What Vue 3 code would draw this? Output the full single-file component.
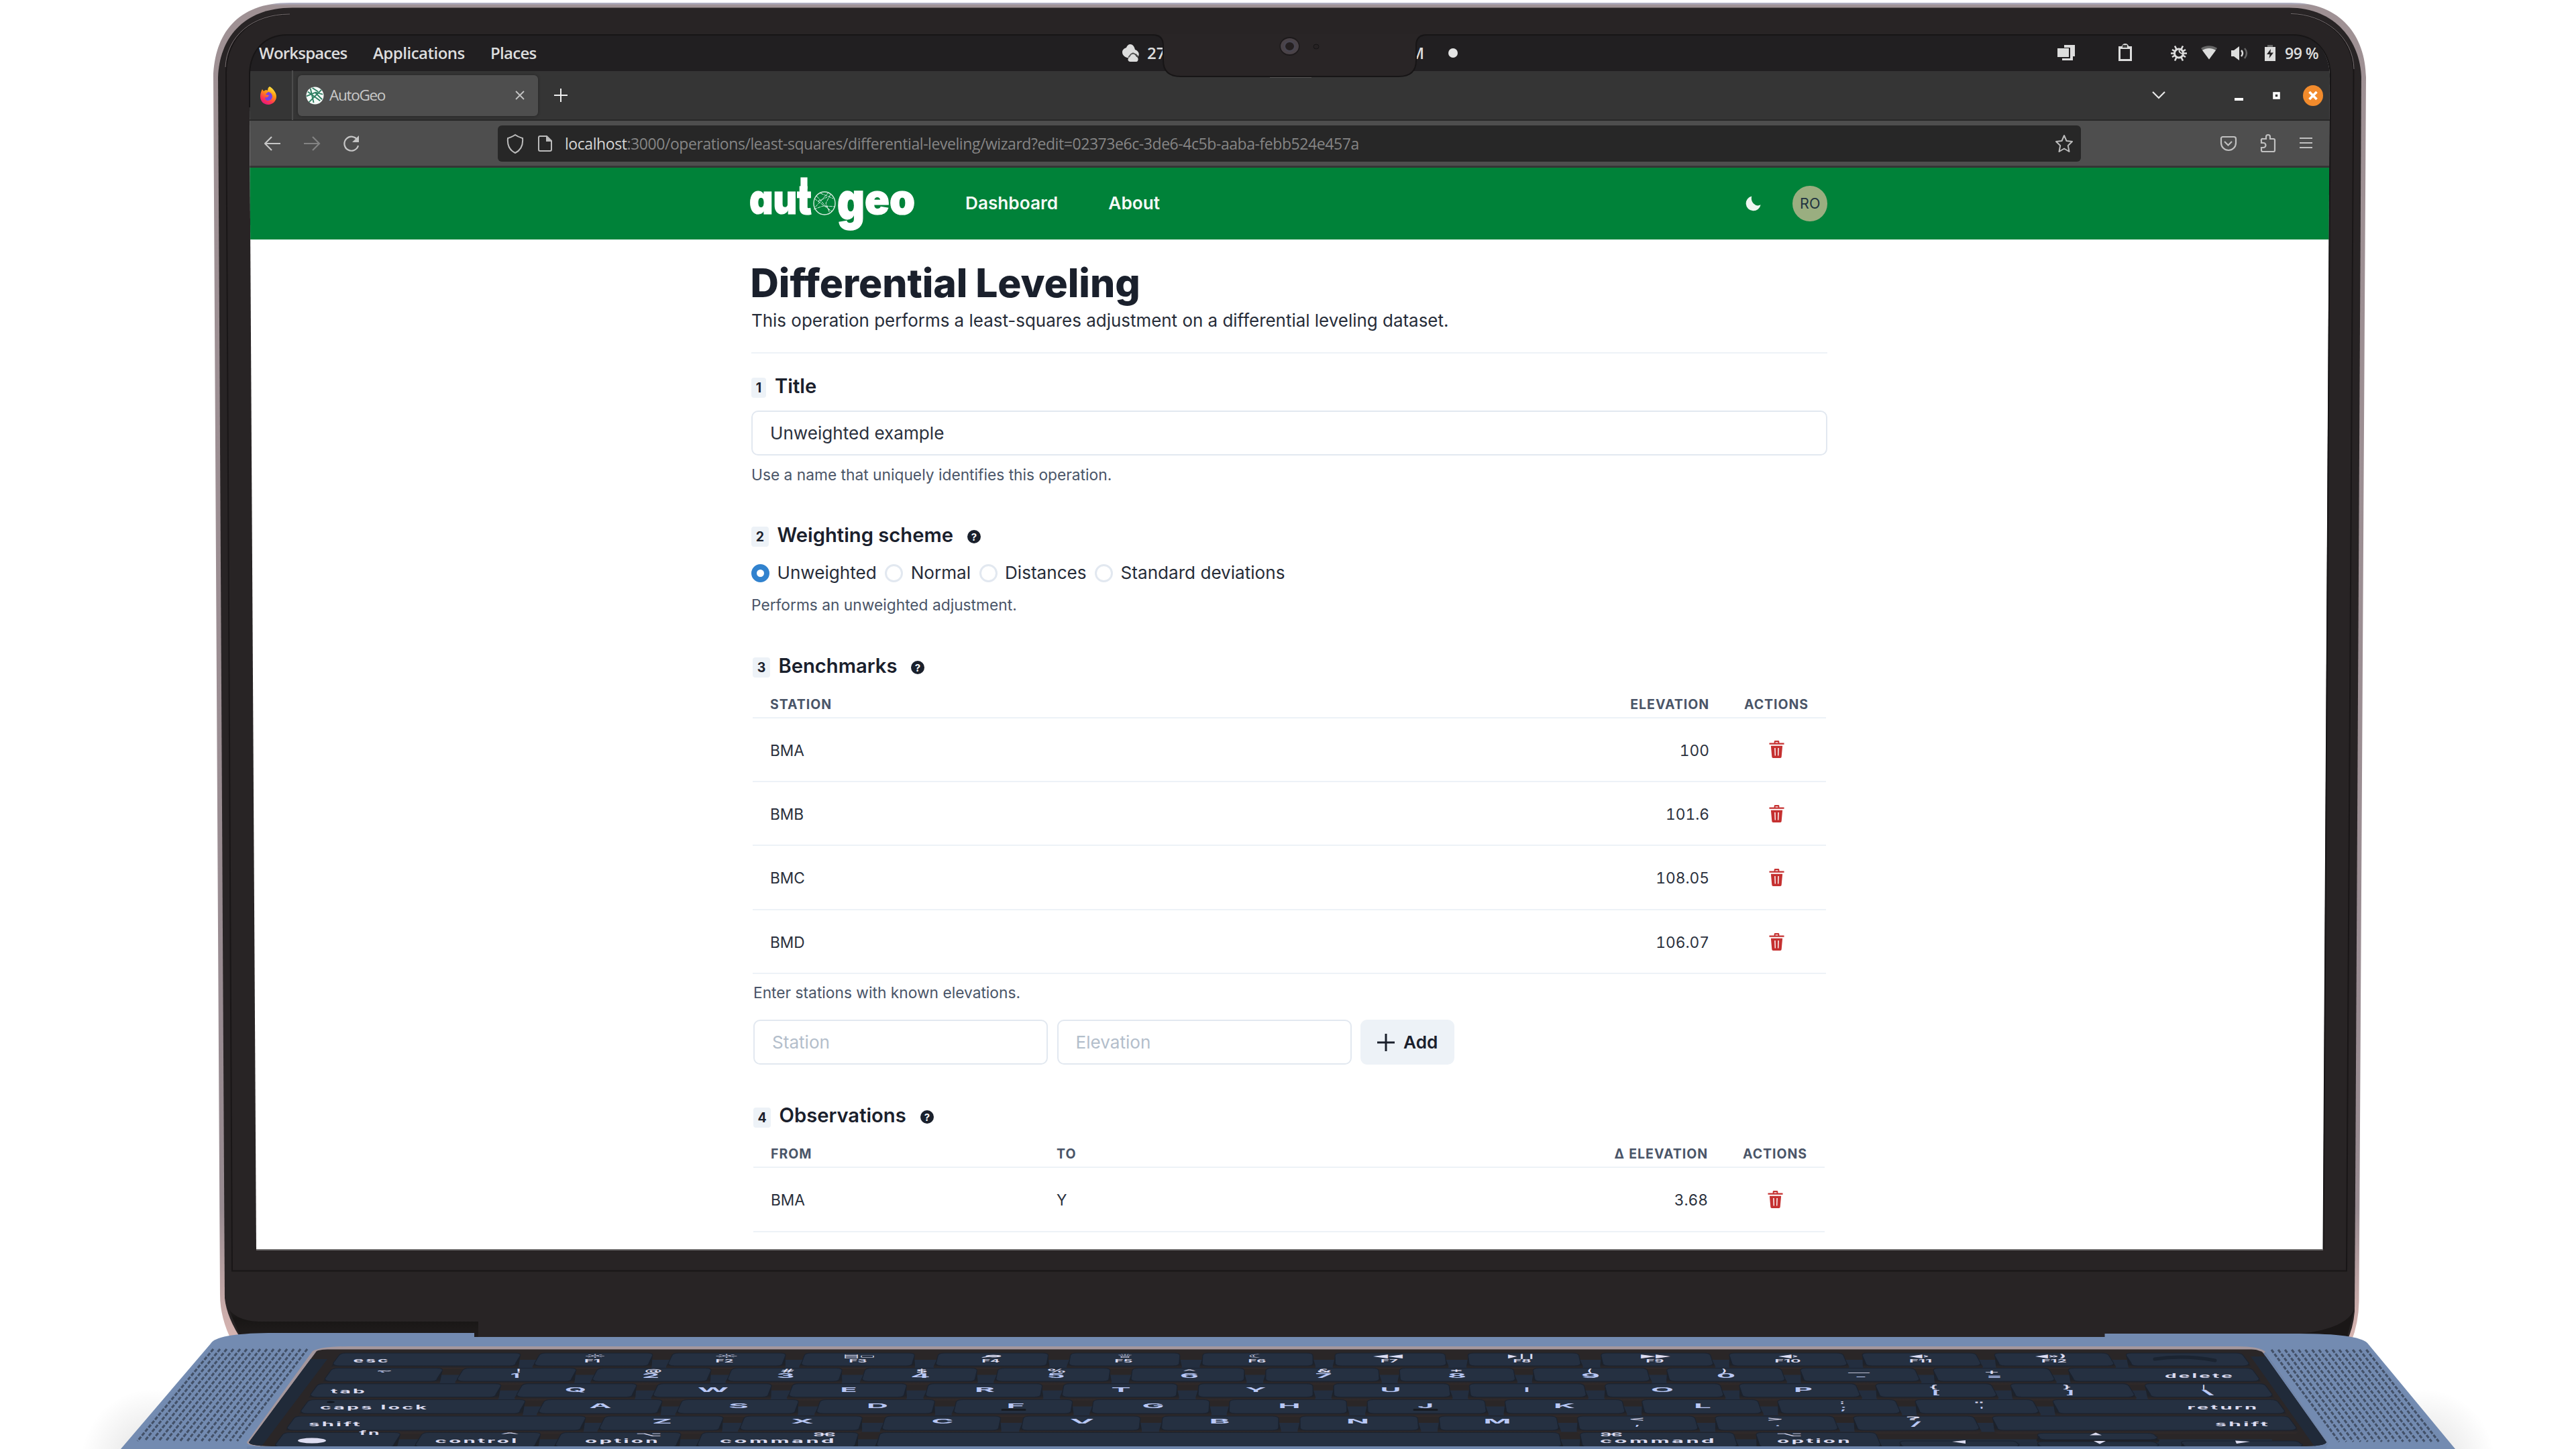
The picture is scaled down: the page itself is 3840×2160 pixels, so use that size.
<script setup>
const benchmarks = [
  { station: 'BMA', elevation: '100' },
  { station: 'BMB', elevation: '101.6' },
  { station: 'BMC', elevation: '108.05' },
  { station: 'BMD', elevation: '106.07' },
]
const observations = [{ from: 'BMA', to: 'Y', delta: '3.68' }]
const schemes = ['Unweighted', 'Normal', 'Distances', 'Standard deviations']

// Keyboard rows: top edge, bottom edge and the [left, right] span of every key cap.
const rows = [
  { t: 2017, b: 2036, keys: [[507, 777], [805, 974], [1003, 1172], [1200, 1364], [1399, 1563], [1596, 1759], [1793, 1957], [1990, 2154], [2188, 2353], [2386, 2549], [2577, 2747], [2775, 2945], [2972, 3142], [3168, 3342]] },
  { t: 2039.5, b: 2059, keys: [[495, 661], [691, 860], [891, 1061], [1091, 1256], [1290, 1457], [1488, 1655], [1688, 1855], [1887, 2055], [2086, 2256], [2285, 2455], [2484, 2655], [2683, 2854], [2881, 3054], [3082, 3357]] },
  { t: 2062.7, b: 2082.5, keys: [[474, 748], [779, 950], [981, 1151], [1182, 1352], [1384, 1554], [1586, 1755], [1787, 1957], [1988, 2160], [2190, 2361], [2392, 2564], [2592, 2766], [2795, 2968], [2996, 3172], [3196, 3376]] },
  { t: 2086.5, b: 2107, keys: [[460, 784], [812, 988], [1017, 1191], [1223, 1394], [1426, 1599], [1630, 1803], [1833, 2007], [2038, 2213], [2243, 2418], [2447, 2620], [2649, 2825], [2854, 3030], [3059, 3394]] },
  { t: 2111, b: 2132, keys: [[440, 874], [902, 1079], [1110, 1286], [1320, 1492], [1526, 1700], [1733, 1906], [1938, 2113], [2145, 2320], [2351, 2526], [2556, 2733], [2762, 2942], [2969, 3411]] },
  { t: 2135.5, b: 2157, keys: [[423, 598], [630, 807], [837, 1016], [1047, 1280], [1312, 2324], [2355, 2584], [2617, 2796]] },
]
const arrowKeys = [
  { t: 2148, b: 2157, x: [2831, 3006] },
  { t: 2136.5, b: 2146, x: [3036, 3211] },
  { t: 2149, b: 2157, x: [3036, 3214] },
  { t: 2148, b: 2157, x: [3250, 3427] },
]
const lean = (x, h) => (x - 1920) * 0.00038 * h
function cap(l, r, t, b, grow = 0) {
  const h = b - t
  const bl = l + lean(l, h) - grow
  const br = r + lean(r, h) + grow
  const top = t
  const bot = b + grow
  return `M${l + 9},${top} H${r - 9} Q${r},${top} ${r + lean(r, 4)},${top + 4} L${br},${bot - 4} Q${br},${bot} ${br - 9},${bot} H${bl + 9} Q${bl},${bot} ${bl},${bot - 4} L${l + lean(l, 4)},${top + 4} Q${l},${top} ${l + 9},${top} Z`
}
const keyRows = [
  ...rows,
  ...arrowKeys.map((k) => ({ t: k.t, b: k.b, keys: [k.x] })),
]

// Legends: [text, centre x, baseline, width]
const words = [
  ['esc', 554, 2031, 55], ['tab', 520, 2077, 54], ['caps lock', 558, 2101, 162], ['shift', 500, 2126, 80],
  ['fn', 552, 2139, 33], ['control', 711, 2151, 125], ['option', 928, 2151, 112], ['command', 1160, 2151, 174],
  ['command', 2472, 2151, 174], ['option', 2705, 2151, 112], ['shift', 3343, 2126, 82], ['return', 3314, 2101, 107],
  ['delete', 3279, 2054, 104],
]
const fkeys = [
  ['F1', 883, 2031, 24], ['F2', 1080, 2031, 27], ['F3', 1279, 2031, 27], ['F4', 1477, 2031, 27], ['F5', 1675, 2031, 27],
  ['F6', 1874, 2031, 27], ['F7', 2071, 2031, 26], ['F8', 2269, 2031, 27], ['F9', 2467, 2031, 27], ['F10', 2665, 2031, 39],
  ['F11', 2863, 2031, 34], ['F12', 3062, 2031, 38],
]
const letters = [
  ['Q', 858, 2075, 32], ['W', 1063, 2075, 46], ['E', 1265, 2075, 25], ['R', 1468, 2075, 30], ['T', 1671, 2075, 29],
  ['Y', 1872, 2075, 31], ['U', 2073, 2075, 31], ['I', 2276, 2075, 8], ['O', 2478, 2075, 34], ['P', 2688, 2075, 28],
  ['A', 895, 2098.5, 33], ['S', 1101, 2098.5, 30], ['D', 1308, 2098.5, 32], ['F', 1514, 2098.5, 27], ['G', 1719, 2098.5, 33],
  ['H', 1922, 2098.5, 33], ['J', 2125, 2098.5, 24], ['K', 2332, 2098.5, 32], ['L', 2538, 2098.5, 26],
  ['Z', 987, 2121.5, 30], ['X', 1196, 2121.5, 34], ['C', 1405, 2121.5, 33], ['V', 1613, 2121.5, 36], ['B', 1818, 2121.5, 31],
  ['N', 2024, 2121.5, 34], ['M', 2232, 2121.5, 41],
  ['1', 768, 2054, 14], ['2', 970, 2054, 26], ['3', 1171, 2054, 27], ['4', 1372, 2054, 29], ['5', 1574, 2054, 27],
  ['6', 1773, 2054, 28], ['7', 1973, 2054, 25], ['8', 2172, 2054, 28], ['9', 2371, 2054, 28], ['0', 2573, 2054, 28],
  ['-', 2774, 2055, 18], ['=', 2973, 2055, 24], ['`', 570, 2052, 12],
  ['[', 2886, 2079, 13], [']', 3086, 2079, 13], ['\\', 3291, 2079, 20], [';', 2748, 2102, 9], ["'", 2954, 2104, 7],
  [',', 2441, 2125, 8], ['.', 2650, 2126, 8], ['/', 2856, 2126, 16],
]
const shifted = [
  ['~', 573, 2046, 26], ['!', 773, 2046, 8], ['@', 974, 2046, 27], ['#', 1174, 2046, 22], ['$', 1374, 2046, 18],
  ['%', 1575, 2046, 27], ['^', 1773, 2047, 24], ['&', 1974, 2046, 22], ['*', 2171, 2047, 18], ['(', 2370, 2046, 8],
  [')', 2570, 2046, 8], ['_', 2771, 2045, 32], ['+', 2969, 2048, 24], ['{', 2882, 2070, 15], ['}', 3081, 2070, 15],
  ['|', 3285, 2070, 6], [':', 2746, 2093, 7], ['"', 2950, 2095, 17], ['<', 2440, 2118, 25], ['>', 2646, 2118, 26], ['?', 2852, 2117, 24],
  ['^', 760, 2141, 34], ['⌥', 967, 2141, 40], ['⌘', 1229, 2141, 38], ['⌘', 2402, 2141, 38], ['⌥', 2667, 2141, 40],
  ['☼', 887, 2024, 34], ['☼', 1083, 2024, 38], ['▤▭', 1281, 2024, 48], ['⌕', 1479, 2024, 30], ['♕', 1677, 2024, 26],
  ['☾', 1875, 2024, 30], ['◀◀', 2069, 2024, 44], ['▶❙❙', 2269, 2024, 42], ['▶▶', 2468, 2024, 44],
  ['◀›', 2666, 2024, 30], ['◀›', 2861, 2024, 30], ['◀»)', 3057, 2024, 46],
]
const leftGrille = Array.from({ length: 15 }, (_, i) => [318 + i * 10, 205 + i * 10.6])
const rightGrille = Array.from({ length: 15 }, (_, i) => [3386 + i * 10.1, 3487 + i * 10.6])
</script>

<template>
  <div class="stage">
    <svg class="layer" viewBox="0 0 3840 2160">
      <defs>
        <linearGradient id="rim" x1="0" x2="0" y1="0" y2="1">
          <stop offset="0" stop-color="#b3b6cd" />
          <stop offset="0.002" stop-color="#9f9194" />
          <stop offset="0.9" stop-color="#988b91" />
          <stop offset="1" stop-color="#d9b6b2" />
        </linearGradient>
        <linearGradient id="hinge" x1="0" x2="0" y1="0" y2="1">
          <stop offset="0" stop-color="#282425" />
          <stop offset="0.4" stop-color="#181615" />
          <stop offset="1" stop-color="#221e1e" />
        </linearGradient>
        <linearGradient id="side" x1="0" x2="0" y1="0" y2="1">
          <stop offset="0" stop-color="#1a212c" />
          <stop offset="0.7" stop-color="#1f2229" />
          <stop offset="1" stop-color="#322a29" />
        </linearGradient>
        <radialGradient id="shade">
          <stop offset="0" stop-color="#000" stop-opacity="0.13" />
          <stop offset="1" stop-color="#000" stop-opacity="0" />
        </radialGradient>
        <clipPath id="wellclip">
          <path d="M472,2014 Q482,2010 520,2010 H3335 Q3365,2010 3373,2016 L3468,2150 Q3465,2156 3430,2156 H415 Q372,2156 371,2150 Z" />
        </clipPath>
      </defs>
      <ellipse cx="230" cy="2180" rx="110" ry="110" fill="url(#shade)" />
      <ellipse cx="3610" cy="2180" rx="110" ry="110" fill="url(#shade)" />

      <!-- lid -->
      <path d="M318,115 C320,52 352,4 432,4 H3415 C3490,4 3526,54 3527,115 L3516.500,1940 Q3516,1972 3505,2000 H346 Q328,1965 328,1930 Z" fill="url(#rim)" />
      <path d="M325,115 C327,60 360,11.500 436,11.500 H3412 C3482,11.500 3518,62 3520,115 L3510,1955 Q3508,1980 3498,2000 H362 Q338,1965 335,1935 Z" fill="#282425" />
      <path d="M432,21 C375,21 338,55 337,108 L346,1894.500 H3498 L3508.500,108 C3508,55 3465,21 3415,21" fill="none" stroke="#191617" stroke-width="2" />
      <path d="M432,21 C375,21 338,55 336,100 M3415,20.500 C3465,21 3508,55 3509,103" fill="none" stroke="#776f71" stroke-width="1" />
      <path d="M338,1945 Q347,1968 385,1970 H713 V1996 H360 Z" fill="url(#hinge)" />
      <path d="M3510,1950 Q3500,1980 3430,1988 L3498,1996 Z" fill="#1a1717" />

      <!-- deck -->
      <path d="M180,2160 L314,2003 Q322,1988 400,1987 H707 V1993 H3137.500 V1988 H3426 Q3515,1988 3529,2002 L3660,2160 Z" fill="#738bb1" />
      <g stroke="#3b475c" stroke-width="3.200" stroke-dasharray="5.500 2.200" opacity="0.85">
        <path v-for="(g, i) in leftGrille" :key="'l' + i" :d="`M${g[0]},2011 L${g[1]},2148`" />
        <path v-for="(g, i) in rightGrille" :key="'r' + i" :d="`M${g[0]},2012 L${g[1]},2149`" />
      </g>
      <path d="M466,2014 Q480,2007 520,2007 H3335 Q3368,2007 3377,2015 L3471,2151 Q3466,2157 3430,2157 H415 Q368,2157 368,2150 Z" fill="#a4979d" />
      <path d="M3377,2015 L3471,2151 L3468,2156 L3300,2157 L3340,2050 Z" fill="#6d84a9" />
      <g clip-path="url(#wellclip)">
        <rect x="360" y="2011.500" width="3120" height="146" fill="#2a2627" />
        <path d="M488,2026 L390,2156 H360 L460,2026 Z M3355,2022 L3450,2156 H3480 L3390,2022 Z" fill="#202a39" />
        <g v-for="(row, i) in rows" :key="'band' + i">
          <rect :x="row.keys[0][0]" :y="row.t + 10" :width="3840 - 2 * row.keys[0][0] - 30" height="13.500" fill="#232e3f" />
        </g>
        <g v-for="(row, i) in keyRows" :key="'row' + i">
          <path v-for="(k, j) in row.keys" :key="'s' + j" :d="cap(k[0], k[1], row.t + 2, row.b + 1, 4)" fill="url(#side)" />
          <path v-for="(k, j) in row.keys" :key="'k' + j" :d="cap(k[0], k[1], row.t, row.b)" fill="#253041" stroke="#1b2330" stroke-width="1.200" />
        </g>
        <g class="legend">
          <text v-for="(w, i) in words" :key="'w' + i" :x="w[1] - w[3] / 2" :y="w[2]" :textLength="w[3]" lengthAdjust="spacingAndGlyphs" font-size="9" class="word">{{ w[0] }}</text>
          <text v-for="(w, i) in fkeys" :key="'f' + i" :x="w[1] - w[3] / 2" :y="w[2]" :textLength="w[3]" lengthAdjust="spacingAndGlyphs" font-size="6.500" font-weight="700">{{ w[0] }}</text>
          <text v-for="(w, i) in letters" :key="'c' + i" :x="w[1] - w[3] / 2" :y="w[2]" :textLength="w[3]" lengthAdjust="spacingAndGlyphs" font-size="9.5" class="cool">{{ w[0] }}</text>
          <text v-for="(w, i) in shifted" :key="'u' + i" :x="w[1] - w[3] / 2" :y="w[2]" :textLength="w[3]" lengthAdjust="spacingAndGlyphs" font-size="7.5" class="sym">{{ w[0] }}</text>
          <ellipse cx="465" cy="2147.500" rx="21" ry="4" />
          <path d="M2910,2149 l20,-2 v5 Z M3115,2139.500 l9,-4 l9,4 Z M3121,2148 h18 l-9,4.500 Z M3332,2147.500 l22,1.500 l-20,3 Z" />
        </g>
        <path d="M3212,2026 Q3255,2019 3302,2028" fill="none" stroke="#1b2431" stroke-width="5" stroke-linecap="round" />
        <ellipse cx="493" cy="2090" rx="6" ry="1.500" fill="#11161f" />
        <path d="M1494,2101.500 h34 M2108,2101.500 h34" stroke="#171b22" stroke-width="3" stroke-linecap="round" />
      </g>
      <rect x="368" y="2156" width="3100" height="4" fill="#6d85ab" />
    </svg>

    <div class="screen">
      <div class="topbar">
        <span class="m1">Workspaces</span><span class="m2">Applications</span><span class="m3">Places</span>
        <svg class="weather" viewBox="0 0 28 27">
          <path d="M13,0 C17,0 19,4 20,8 C25,10 27,14 25,18 C23,16 22,14 20,14 C16,12 13,14 11,20 C7,21 1,17 1,12 C1,8 4,6 7,5 C8,2 10,0 13,0 Z M18,14.500 C20,15 21,17 22,18.500 C26,20 25,26 22,26 H13 C9,26 8,21 12,19 C13,16 15,14 18,14.500 Z" fill="#ddd" />
          <path d="M10,19.500 L14,14.500 L17,13 L21,15 L25,19" fill="none" stroke="#555" stroke-width="1.500" />
        </svg>
        <span class="temp">27</span>
        <span class="meridiem">M</span>
        <i class="notice"></i>
        <svg class="tray" viewBox="0 0 400 28">
          <g fill="#ddd">
            <path d="M11,2 H27 V19 H24 V25 H8 V22 H20 V6 H11 Z" />
            <rect x="1" y="7" width="17" height="13" />
            <path d="M92,4 h5 a5,4 0 0 1 10,0 h5 v22 h-20 Z M95,8 v15 h14 v-15 Z" fill-rule="evenodd" />
            <path d="M227,23.500 L215,7 C221,2 233,2 239,7 Z" fill="#666" />
            <path d="M227,23.500 L217,10 C223,6 231,6 237,10 Z" />
            <path d="M260,10 h4 l8,-6 v21 l-8,-6 h-4 Z" />
            <path d="M310,5 h4 v-2 h8 v2 h4 v21 h-16 Z" />
          </g>
          <path d="M98,2 h7 v4 h-7 Z" fill="#444" />
          <path d="M314,2 h8 v3 h-8 Z" fill="#666" />
          <path d="M319,8 L313,16 H317.500 L316.500,22 L323,13.500 H318.500 Z" fill="#211f21" />
          <path d="M275,10 q4,4 0,9" fill="none" stroke="#ddd" stroke-width="2.500" />
          <path d="M280,7 q6,7 0,15" fill="none" stroke="#666" stroke-width="2.500" />
          <g stroke="#ddd" stroke-width="3" fill="none">
            <circle cx="182" cy="14.500" r="6.500" />
            <path d="M188,14.500 h6 M170,14.500 h6 M185,9.500 l3,-6 M179,9.500 l-3,-6 M185,19.500 l3,6 M179,19.500 l-3,6 M187,12 l5,-3 M177,12 l-5,-3 M187,17 l5,3 M177,17 l-5,3" stroke-width="2.600" />
            <path d="M183,9 q-2,4 4,6" stroke-width="2" />
          </g>
        </svg>
        <span class="battery">99 %</span>
      </div>

      <div class="tabs">
        <svg class="fox" viewBox="0 0 26 27">
          <defs>
            <linearGradient id="fire" x1="0.8" y1="0" x2="0.3" y2="1">
              <stop offset="0" stop-color="#fff44f" /><stop offset="0.4" stop-color="#ff980e" /><stop offset="0.75" stop-color="#ff3750" /><stop offset="1" stop-color="#e5157f" />
            </linearGradient>
          </defs>
          <path d="M15,0 C20,3 25,9 25,15 C25,22 19,27 13,27 C6,27 1,22 1,15 C1,11 2,7 4,4 L6,7 C8,5 11,5 12,6 C12,3 13,1 15,0 Z" fill="url(#fire)" />
          <path d="M12,8 C16,8 19,11 19,15 C19,18 16,21 12.500,21 C10,21 8,19 8,16 C10,17 13,16 14,13 C12,13 9,12 9,11 C10,10 12,10 12,8 Z" fill="#7542e5" />
        </svg>
        <i class="sep"></i>
        <div class="tab">
          <svg class="favicon" viewBox="0 0 28 28">
            <circle cx="14" cy="14" r="13.500" fill="#f4faf7" />
            <path d="M3,8 L22,22 M24,5 L5,24 M7,3 L12,25 M1,15 L15,9 L26,12 M14,9 L25,20 M10,2 L19,8" fill="none" stroke="#2f7f63" stroke-width="2" />
          </svg>
          <span>AutoGeo</span>
          <svg class="x" viewBox="0 0 16 16"><path d="M2,2 L14,14 M14,2 L2,14" stroke="#c4c4c4" stroke-width="1.800" /></svg>
        </div>
        <svg class="plus" viewBox="0 0 20 20"><path d="M10,0 V20 M0,10 H20" stroke="#eee" stroke-width="2" /></svg>
        <svg class="wm" viewBox="0 0 270 32">
          <g fill="none" stroke="#e8e8e8">
            <path d="M9,11 L18,20 L27,11" stroke-width="2.200" />
            <path d="M131,22 h13" stroke="#fff" stroke-width="4" />
            <rect x="190" y="13" width="7" height="7" stroke="#fff" stroke-width="3.600" />
          </g>
          <ellipse cx="248" cy="16.500" rx="15" ry="15.500" fill="#f28b2c" />
          <path d="M242.500,11 l11,11 M253.500,11 l-11,11" stroke="#fff" stroke-width="3.600" />
        </svg>
      </div>

      <div class="nav">
        <svg class="arrows" viewBox="0 0 150 28">
          <g fill="none" stroke="#c6c6c6" stroke-width="2.200">
            <path d="M24,14 H1 M11,4 L1,14 L11,24" />
            <path d="M59,14 H82 M72,4 L82,14 L72,24" stroke="#838383" />
            <path d="M139,9 A10.500,10.500 0 1 0 140,17" />
          </g>
          <path d="M141,2 V12 H131 Z" fill="#c6c6c6" />
        </svg>
        <div class="url">
          <svg class="shield" viewBox="0 0 72 30">
            <g fill="none" stroke="#bbb" stroke-width="2">
              <path d="M14,2 C18,5 22,6 25,7 C26,17 22,25 14,29 C6,25 2,17 3,7 C6,6 10,5 14,2 Z" />
              <path d="M51,4 H61 L68,11 V24 a2,2 0 0 1 -2,2 H51 a2,2 0 0 1 -2,-2 V6 a2,2 0 0 1 2,-2 Z" />
            </g>
            <path d="M60,4 V12 H69 Z" fill="#bbb" />
          </svg>
          <span><b>localhost</b>:3000/operations/least-squares/differential-leveling/wizard?edit=02373e6c-3de6-4c5b-aaba-febb524e457a</span>
          <svg class="star" viewBox="0 0 28 28"><path d="M14,2 L17.500,10 L26,11 L19.800,17 L21.500,26 L14,21.500 L6.500,26 L8.200,17 L2,11 L10.500,10 Z" fill="none" stroke="#bbb" stroke-width="2" stroke-linejoin="round" /></svg>
        </div>
        <svg class="tools" viewBox="0 0 160 30">
          <g fill="none" stroke="#c0c0c0" stroke-width="2.200">
            <path d="M13,5 h17 a3,3 0 0 1 3,3 v6 a11,11 0 0 1 -22,0 v-6 a2.500,2.500 0 0 1 2,-3 Z M16,12 l5.500,5.500 l5.500,-5.500" />
            <path d="M71,11 a2,2 0 0 1 2,-3 h5 v-3 a3,3 0 0 1 6,0 v3 h5 a2,2 0 0 1 2,2 v15 a2,2 0 0 1 -2,2 h-16 a2,2 0 0 1 -2,-2 v-4 h3 a3.500,3.500 0 0 0 0,-7 h-3 Z" />
            <path d="M128,7 h19 M128,14 h19 M128,21 h19" />
          </g>
        </svg>
      </div>

      <header class="header">
        <div class="container bar">
          <svg class="logo" viewBox="0 0 244 100">
            <g fill="#fff" stroke="#fff" stroke-width="1.200">
              <text x="-2" y="65" textLength="93" lengthAdjust="spacingAndGlyphs">aut</text>
              <text x="129" y="65" textLength="41" lengthAdjust="spacingAndGlyphs" transform="translate(0 -7.900) scale(1 1.250)">g</text>
              <text x="170" y="65" textLength="75" lengthAdjust="spacingAndGlyphs">eo</text>
              <rect x="75" y="11" width="9" height="16" />
            </g>
            <g fill="none" stroke="#fff" stroke-width="1.400" opacity="0.85">
              <ellipse cx="110" cy="49" rx="16" ry="17" />
              <path d="M95,42 L121,61 M98,38 L118,60 M116,33 L96,55 M104,34 L123,42 M94,58 L108,53 L126,54 M119,36 L112,49 L118,64 M100,46 L114,40" stroke-dasharray="5 1" stroke-width="1" />
            </g>
          </svg>
          <a class="dash">Dashboard</a>
          <a class="about">About</a>
          <svg class="moon" viewBox="0 0 26 26"><path d="M10,1 A10.500,12 0 0 0 24.500,15 A12,12 0 1 1 10,1 Z" fill="#eef6f1" /></svg>
          <div class="avatar">RO</div>
        </div>
      </header>

      <main class="container">
        <h1>Differential Leveling</h1>
        <p class="lead">This operation performs a least-squares adjustment on a differential leveling dataset.</p>
        <hr />

        <section class="title">
          <h2><i class="num one">1</i>Title</h2>
          <div class="input">Unweighted example</div>
          <p class="help">Use a name that uniquely identifies this operation.</p>
        </section>

        <section class="weights">
          <h2><i class="num">2</i>Weighting scheme
            <svg class="q" viewBox="0 0 20 20"><circle cx="10" cy="10" r="10" /><text x="10" y="15.500">?</text></svg>
          </h2>
          <div class="radios">
            <label v-for="(s, i) in schemes" :key="s"><i :class="{ on: i === 0 }"></i>{{ s }}</label>
          </div>
          <p class="help">Performs an unweighted adjustment.</p>
        </section>

        <section class="bench">
          <h2><i class="num">3</i>Benchmarks
            <svg class="q" viewBox="0 0 20 20"><circle cx="10" cy="10" r="10" /><text x="10" y="15.500">?</text></svg>
          </h2>
          <div class="tr th two"><span>STATION</span><span class="n">ELEVATION</span><span class="act">ACTIONS</span></div>
          <div v-for="b in benchmarks" :key="b.station" class="tr two">
            <span>{{ b.station }}</span><span class="n">{{ b.elevation }}</span>
            <span class="act"><svg class="trash" viewBox="0 0 24 28"><path d="M8,4 V2 a1.500,1.500 0 0 1 1.500,-1.500 h5 A1.500,1.500 0 0 1 16,2 V4 H23.500 V6.500 H0.500 V4 Z M10,4 h4 v-1.300 h-4 Z M3,8.500 H21 L19.500,25.500 a2,2 0 0 1 -2,2 H6.500 a2,2 0 0 1 -2,-2 Z M8.500,12 L9,24 H10.400 L10.100,12 Z M13.900,12 L13.600,24 H15 L15.500,12 Z" fill-rule="evenodd" /></svg></span>
          </div>
          <p class="help">Enter stations with known elevations.</p>
          <div class="adder">
            <div class="input ghost">Station</div>
            <div class="input ghost">Elevation</div>
            <div class="button"><svg viewBox="0 0 26 26"><path d="M13,0 V26 M0,13 H26" stroke="#1a202c" stroke-width="3" /></svg>Add</div>
          </div>
        </section>

        <section class="obs">
          <h2><i class="num">4</i>Observations
            <svg class="q" viewBox="0 0 20 20"><circle cx="10" cy="10" r="10" /><text x="10" y="15.500">?</text></svg>
          </h2>
          <div class="tr th three"><span>FROM</span><span class="plain">TO</span><span class="n">Δ ELEVATION</span><span class="act">ACTIONS</span></div>
          <div v-for="o in observations" :key="o.from" class="tr three">
            <span>{{ o.from }}</span><span class="plain">{{ o.to }}</span><span class="n">{{ o.delta }}</span>
            <span class="act"><svg class="trash" viewBox="0 0 24 28"><path d="M8,4 V2 a1.500,1.500 0 0 1 1.500,-1.500 h5 A1.500,1.500 0 0 1 16,2 V4 H23.500 V6.500 H0.500 V4 Z M10,4 h4 v-1.300 h-4 Z M3,8.500 H21 L19.500,25.500 a2,2 0 0 1 -2,2 H6.500 a2,2 0 0 1 -2,-2 Z M8.500,12 L9,24 H10.400 L10.100,12 Z M13.900,12 L13.600,24 H15 L15.500,12 Z" fill-rule="evenodd" /></svg></span>
          </div>
        </section>
      </main>
    </div>

    <!-- camera notch and glass edge -->
    <svg class="layer" viewBox="0 0 3840 2160">
      <path d="M1722,50 Q1734,52 1734,66 V90 Q1734,114 1760,114 H2085 Q2111,114 2111,90 V66 Q2111,52 2124,50 Z" fill="#292526" />
      <path d="M372,160 V110 C373,75 395,52 428,52 H1718 Q1734,52 1734,68 V90 Q1734,114 1760,114 H2085 Q2111,114 2111,90 V68 Q2111,52 2127,52 H3418 C3450,52 3472,75 3474,110 L3463.500,1862" fill="none" stroke="#171516" stroke-width="2" />
      <path d="M382,1863 H3463" stroke="#8a8889" stroke-width="1.500" />
      <path d="M1893,115.500 H1955" stroke="#555" stroke-width="1" />
      <ellipse cx="1922.500" cy="69" rx="15" ry="14" fill="#1d1a1b" />
      <ellipse cx="1922.500" cy="69" rx="13.500" ry="12" fill="#4a4348" />
      <ellipse cx="1922.500" cy="69" rx="9" ry="8.500" fill="#484550" />
      <ellipse cx="1922.500" cy="69" rx="6.500" ry="6" fill="#241f20" />
      <ellipse cx="1962" cy="69.500" rx="4" ry="3.500" fill="#262223" stroke="#161415" />
    </svg>
  </div>
</template>

<style>
body { background: #fff; }
</style>

<style scoped>
.stage { position: relative; width: 3840px; height: 2160px; overflow: hidden; background: #fff; font-family: Inter, sans-serif; color: #1a202c; }
.layer { position: absolute; left: 0; top: 0; width: 3840px; height: 2160px; }
.legend { fill: #dcdcf0; font-family: Inter, "DejaVu Sans", sans-serif; }
.word { font-weight: 700; letter-spacing: 1px; }
.cool { fill: #b9c8f5; font-weight: 700; }
.sym { font-weight: 600; font-family: "DejaVu Sans", sans-serif; }

.screen { position: relative; margin-left: 372px; width: 3101px; height: 1810px; top: 52px; background: #fff; overflow: hidden; clip-path: path("M0,108 V58 C1,23 23,0 56,0 H3045 C3078,0 3099,23 3101,58 L3091,1810 H10 Z"); }
.screen svg { display: block; flex: none; }

.topbar { display: flex; align-items: center; height: 54px; background: #211f21; color: #ddd; font: 600 24px/54px "Open Sans", sans-serif; letter-spacing: -0.7px; white-space: nowrap; }
.topbar span { flex: none; }
.m1 { width: 170px; margin-left: 14px; letter-spacing: -0.8px; }
.m2 { width: 175px; letter-spacing: -0.5px; }
.m3 { width: 941px; }
.weather { width: 28px; height: 27px; }
.temp { width: 389px; margin-left: 10px; letter-spacing: 0; }
.meridiem { margin-left: 2px; width: 50px; }
.notice { flex: none; width: 14px; height: 14px; border-radius: 50%; background: #e4e4e4; margin-left: 8px; }
.tray { width: 400px; height: 28px; margin-left: 893px; }
.battery { margin-left: -60px; letter-spacing: -0.5px; font-size: 23px; }

.tabs { display: flex; align-items: center; height: 74px; background: #353535; border-bottom: 2px solid #282828; box-sizing: border-box; }
.fox { width: 26px; height: 27px; margin-left: 15px; }
.sep { width: 2px; height: 74px; background: #4c4c4c; margin-left: 22px; }
.tab { display: flex; align-items: center; width: 358px; height: 61px; margin-left: 7px; border-radius: 6px; background: #4e4e4e; box-shadow: 0 0 4px rgba(0, 0, 0, 0.35); color: #c9c9c9; font: 400 22.500px/58px "Open Sans", sans-serif; letter-spacing: -1.300px; }
.favicon { width: 27px; height: 27px; margin-left: 12px; }
.tab span { width: 268px; margin-left: 8px; margin-top: -1px; }
.x { width: 16px; height: 16px; margin-left: 8px; }
.plus { width: 20px; height: 20px; margin-left: 24px; }
.wm { width: 270px; height: 32px; margin-left: 2354px; }

.nav { display: flex; align-items: center; height: 70px; background: #4e4e4e; border-bottom: 3px solid #353535; box-sizing: border-box; }
.arrows { width: 150px; height: 28px; margin-left: 22px; }
.url { display: flex; align-items: center; width: 2360px; height: 54px; margin-left: 198px; border-radius: 6px; background: #272727; color: #858585; font: 400 23px/54px "Open Sans", sans-serif; letter-spacing: -0.435px; white-space: nowrap; }
.url b { font-weight: 400; color: #d6d6d6; }
.shield { width: 72px; height: 30px; margin-left: 12px; }
.url span { margin-left: 16px; width: 2221px; }
.star { width: 28px; height: 28px; }
.tools { width: 160px; height: 30px; margin-left: 198px; }

.header { height: 107px; background: #008239; }
.container { margin-left: 748px; width: 1604px; }
.bar { display: flex; align-items: center; height: 107px; color: #f4faf6; font-weight: 600; font-size: 26.200px; line-height: 40px; }
.logo { width: 244px; height: 100px; margin-left: -1px; overflow: visible; font: 900 61px Inter, sans-serif; font-feature-settings: "cv11"; }
.dash { width: 215px; margin-left: 76px; margin-top: -1px; }
.about { width: 120px; margin-top: -1px; }
.moon { width: 24px; height: 25px; margin-left: 831px; }
.avatar { margin-left: 46px; width: 52px; height: 53px; border-radius: 50%; background: #9aae80; color: #1f3340; font-weight: 400; font-size: 21.500px; line-height: 52px; text-align: center; }

main { padding-top: 29px; }
h1 { margin: 0 0 0 -1.500px; font-size: 58.700px; line-height: 72px; font-weight: 800; word-spacing: -1px; letter-spacing: -0.050px; white-space: nowrap; }
p { margin: 0; white-space: nowrap; }
.lead { font-size: 25.950px; line-height: 40px; margin-top: -0.500px; color: #262c38; }
hr { border: 0; height: 2px; margin: 27px 0 0; background: #edf2f7; }
h2 { margin: 0; display: flex; align-items: center; height: 44px; font-size: 29.200px; line-height: 44px; font-weight: 600; white-space: nowrap; }
.num { display: block; width: 26px; height: 30px; margin: 5px 12.500px 0 0; border-radius: 4px; background: #edf2f7; font: 700 19.500px/30px Inter, sans-serif; text-align: center; }
.num.one { width: 22px; margin-right: 13px; }
.q { width: 20px; height: 20px; margin: 4px 0 0 21px; fill: #1a202c; }
.q text { fill: #fff; font: 700 15px Inter, sans-serif; text-anchor: middle; }
.help { font-size: 22.750px; line-height: 32px; color: #4a5568; }
.input { box-sizing: border-box; height: 67px; padding-left: 26px; border: 2px solid #e2e8f0; border-radius: 10px; font-size: 26.100px; line-height: 63px; color: #2a303c; }

.title { margin-top: 27px; }
.title .input { margin-top: 14px; }
.title .help { margin-top: 13px; }
.weights { margin-top: 52px; }
.radios { display: flex; gap: 12.500px; height: 40px; margin-top: 14.500px; font-size: 26.100px; line-height: 40px; color: #262c38; }
.radios label { display: flex; align-items: center; }
.radios i { box-sizing: border-box; width: 27px; height: 27px; margin-right: 11.500px; border-radius: 50%; border: 3px solid #e2e8f0; }
.radios i.on { border: 8px solid #3182ce; }
.weights .help { margin-top: 12px; }

.bench { width: 1600px; margin: 52.500px 0 0 2px; }
.tr { display: grid; box-sizing: border-box; height: 95.450px; border-bottom: 2px solid #edf2f7; font-size: 22.700px; line-height: 95.500px; color: #2a303c; font-variant-numeric: lining-nums tabular-nums; }
.two { grid-template-columns: 1fr 300px 174px; }
.three { grid-template-columns: 452px 1fr 300px 174px; }
.tr span { padding-left: 26px; }
.tr .plain { padding-left: 0; }
.tr .n { padding: 0; text-align: right; }
.tr .act { display: flex; align-items: center; justify-content: center; padding-left: 26px; }
.th { height: 40px; margin-top: 16px; font-weight: 700; font-size: 19.500px; letter-spacing: 0.980px; line-height: 38px; color: #4a5568; }
.trash { width: 23px; height: 28px; margin-top: -2px; fill: #c53030; }
.bench .help { margin: 12px 0 0 1px; }
.adder { display: flex; gap: 13.500px; margin: 24px 0 0 1px; }
.adder .input { width: 439px; }
.ghost { color: #b3becb; }
.button { display: flex; align-items: center; width: 140px; height: 67px; border-radius: 10px; background: #edf2f7; font-size: 26.200px; font-weight: 600; }
.button svg { width: 26px; height: 26px; margin: 0 13px 0 25px; }
.obs { width: 1597px; margin: 54px 0 0 3px; }
</style>
